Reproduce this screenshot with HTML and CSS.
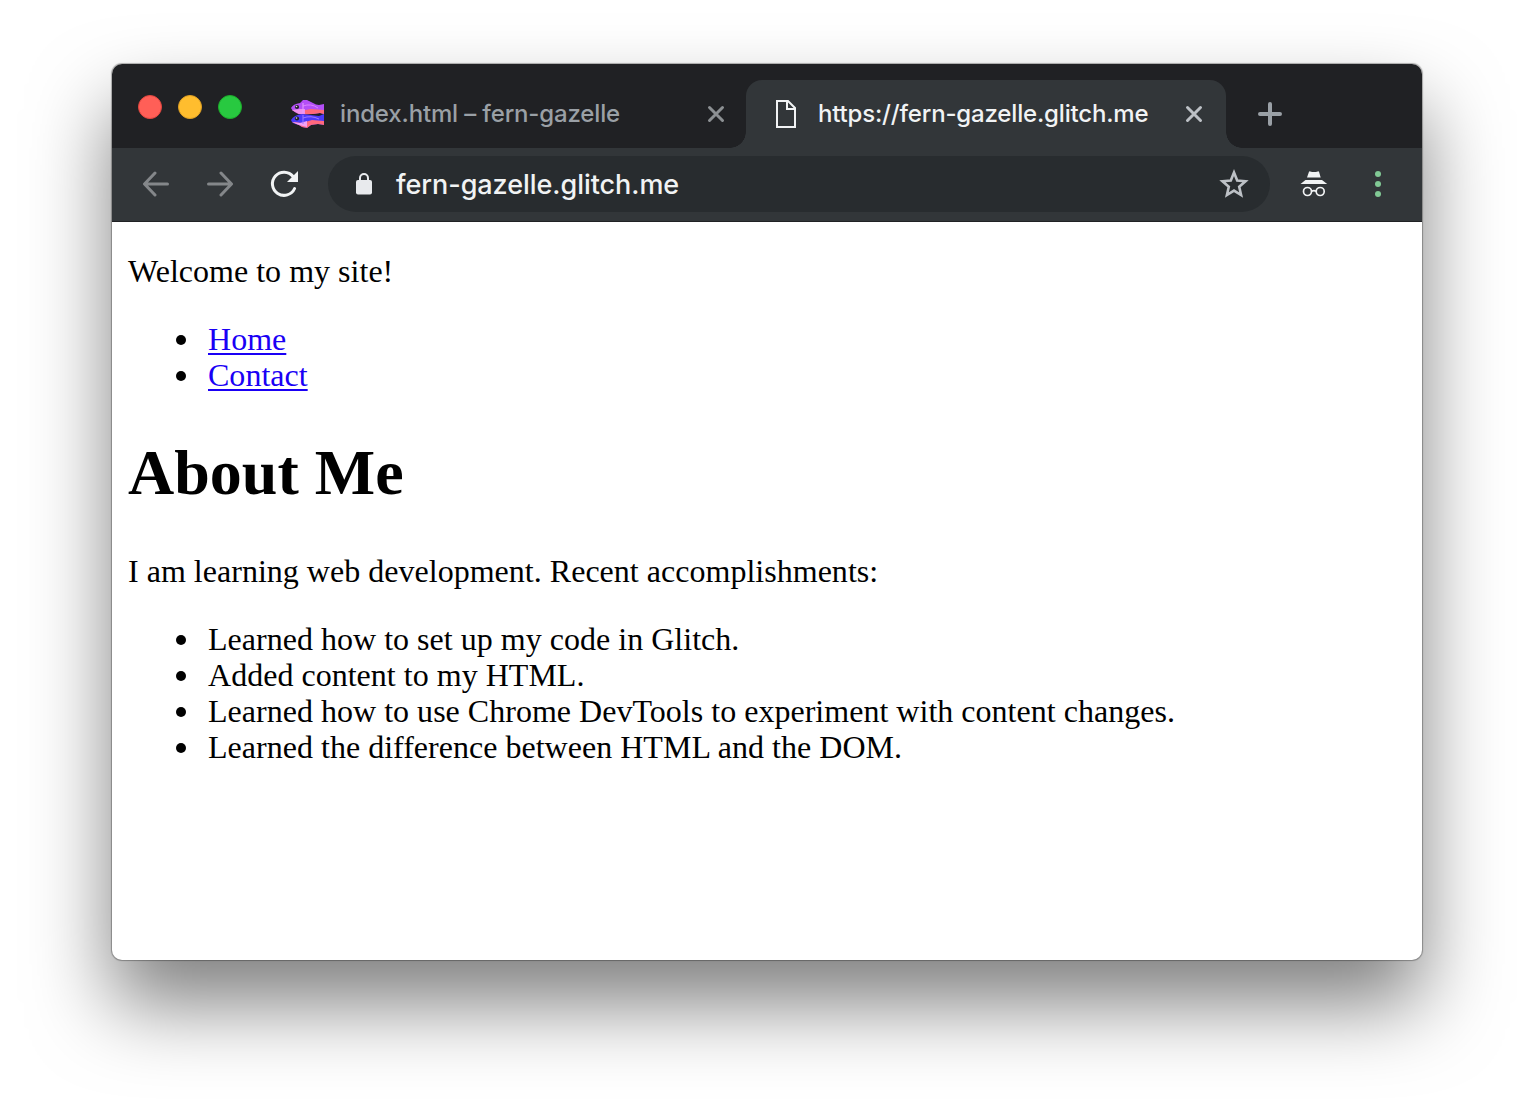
FILE: index.html
```html
<!DOCTYPE html>
<html lang="en">
<head>
<meta charset="utf-8">
<title>fern-gazelle</title>
<link rel="stylesheet" href="styles.css">
</head>
<body>
<div class="window">
  <div class="tabstrip">
    <div class="lights"><span class="light red"></span><span class="light yellow"></span><span class="light green"></span></div>
    <div class="tab">
      <svg class="fish" width="33" height="28" viewBox="0 0 33 28">
        <path d="M0 8Q2 4 9 3L12 0H16L22 3Q25 5 28 5L33 4V14L29 13Q18 15 8 14Q2 12 0 8Z" fill="#b44ff7"/>
        <path d="M1 10Q4 11 9 11L20 9L33 10V14L29 13Q18 15 8 14Z" fill="#ff6878"/>
        <path d="M1 10L9 9L14 9V14H8Z" fill="#ee91ed"/>
        <path d="M12 6Q20 3 27 8" fill="none" stroke="#dc83ff"/><path d="M12 3V13" stroke="#e5a0ff"/>
        <path d="M0 20Q3 15 11 14L28 16L33 14V25L27 24L20 25L16 28L11 27L8 25Q1 24 0 20Z" fill="#4b39fa"/>
        <path d="M1 22L11 23L21 20L33 21V25L27 24L20 25L16 28L11 27L8 25Z" fill="#ff687d"/>
        <path d="M1 22L9 23L16 21V27L8 25Z" fill="#f2a0f3"/>
        <path d="M12 18Q20 15 28 19M12 15V24" fill="none" stroke="#a078ff"/>
        <circle cx="6" cy="7" r="2.1" fill="#202124"/><circle cx="6" cy="18.5" r="2.1" fill="#202124"/>
        <circle cx="5.5" cy="6.5" r=".8" fill="#ddd"/><circle cx="5.5" cy="18" r=".8" fill="#ddd"/>
      </svg>
      <span class="tab-title">index.html – fern-gazelle</span>
      <svg class="close" width="18" height="18" viewBox="0 0 18 18"><path d="M2.5 2.5L15.5 15.5M15.5 2.5L2.5 15.5"/></svg>
    </div>
    <div class="tab active">
      <svg class="doc" width="20" height="28" viewBox="0 0 20 28"><path d="M1 1H12L19 8V27H1ZM11 1V9H19" fill="none" stroke="#f1f3f4" stroke-width="2"/></svg>
      <span class="tab-title">https://fern-gazelle.glitch.me</span>
      <svg class="close" width="18" height="18" viewBox="0 0 18 18"><path d="M2.5 2.5L15.5 15.5M15.5 2.5L2.5 15.5"/></svg>
    </div>
    <svg class="plus" width="24" height="24" viewBox="0 0 24 24"><path d="M12 2V22M2 12H22" stroke="#9aa0a6" stroke-width="4" stroke-linecap="round"/></svg>
  </div>
  <div class="toolbar">
    <svg class="back" width="28" height="26" viewBox="0 0 28 26"><path d="M25.5 13H3M13 2L2.5 13L13 24"/></svg>
    <svg class="forward" width="28" height="26" viewBox="0 0 28 26"><path d="M2.5 13H25M15 2L25.5 13L15 24"/></svg>
    <svg class="reload" width="28" height="28" viewBox="0 0 28 28"><path d="M23.1 6.5A11.6 11.6 0 1 0 24.6 18.5" fill="none" stroke="#f1f3f4" stroke-width="3" stroke-linecap="round"/><path d="M28 1V12H17Z" fill="#f1f3f4"/></svg>
    <div class="omnibox">
      <svg width="16" height="22" viewBox="0 0 16 22"><path d="M4 8V5A4 4 0 0 1 12 5V8" fill="none" stroke="#e8eaed" stroke-width="2"/><rect y="7" width="16" height="14.5" rx="2" fill="#e8eaed"/></svg>
      <span class="url">fern-gazelle.glitch.me</span>
      <svg class="star" width="30" height="30" viewBox="0 0 30 30"><path d="M15 3.6L18.2 11.6L26.5 12.3L20.2 17.7L22.1 26L15 21.6L7.9 26L9.8 17.7L3.5 12.3L11.8 11.6Z" fill="none" stroke="#bdc1c6" stroke-width="2.6"/></svg>
    </div>
    <svg class="incognito" width="28" height="26" viewBox="0 0 28 26"><path d="M7 6.5L9 .8Q9.3 .2 10.2 .4Q14 1.8 17.8 .4Q18.8 .1 19 .8L20.7 6.5ZM5.5 9H22L27.2 13H.5Z" fill="#f1f3f4"/><g fill="none" stroke="#f1f3f4" stroke-width="1.7"><circle cx="7.5" cy="20.5" r="4"/><circle cx="20.2" cy="20.5" r="4"/><path d="M11.5 20.2Q14 19 16.2 20.2"/></g></svg>
    <svg class="menu" width="6" height="26" viewBox="0 0 6 26" fill="#81c995"><circle cx="3" cy="3" r="3"/><circle cx="3" cy="13" r="3"/><circle cx="3" cy="23" r="3"/></svg>
  </div>
  <main class="page">
    <p>Welcome to my site!</p>
    <ul>
      <li><a href="#">Home</a></li>
      <li><a href="#">Contact</a></li>
    </ul>
    <h1>About Me</h1>
    <p>I am learning web development. Recent accomplishments:</p>
    <ul>
      <li>Learned how to set up my code in Glitch.</li>
      <li>Added content to my HTML.</li>
      <li>Learned how to use Chrome DevTools to experiment with content changes.</li>
      <li>Learned the difference between HTML and the DOM.</li>
    </ul>
  </main>
</div>
</body>
</html>
```
FILE: styles.css
```css
* { box-sizing: border-box; }
body { margin: 0; padding: 64px 112px 0; height: 1120px; overflow: hidden; background: #fff; }
svg { display: block; flex: none; }
.window {
  width: 1310px; height: 896px; border-radius: 10px; background: #fff;
  box-shadow: 0 0 1px 1px rgba(0,0,0,.3), 0 44px 80px rgba(0,0,0,.5);
  display: flex; flex-direction: column;
}
.tabstrip {
  height: 84px; flex: none; background: #202124; border-radius: 10px 10px 0 0;
  display: flex; align-items: flex-end; font-family: Inter, sans-serif;
}
.lights { display: flex; gap: 16px; padding-left: 26px; width: 154px; height: 53px; }
.light { width: 24px; height: 24px; border-radius: 50%; }
.red { background: #ff5f57; border: 1px solid #e2463f; }
.yellow { background: #ffbd2e; border: 1px solid #dfa023; }
.green { background: #28c940; border: 1px solid #1dad2b; }
.tab {
  width: 480px; height: 68px; padding: 0 21px 0 25px; position: relative;
  display: flex; align-items: center; color: #9aa0a6; font-size: 24px; white-space: nowrap;
}
.tab-title { flex: 1; margin-left: 16px; font-weight: 500; letter-spacing: -.15px; padding-bottom: 1px; }
.close { stroke: #8c9093; stroke-width: 3; stroke-linecap: round; }
.tab.active { background: #323639; border-radius: 16px 16px 0 0; color: #f1f3f4; padding: 0 23px 0 30px; }
.tab.active .tab-title { margin-left: 22px; letter-spacing: -.17px; }
.active .close { stroke: #bdc1c6; }
.active::before, .active::after { content: ""; position: absolute; bottom: 0; width: 16px; height: 16px; }
.active::before { left: -16px; background: radial-gradient(circle at 0 0, transparent 15.5px, #323639 16px); }
.active::after { right: -16px; background: radial-gradient(circle at 100% 0, transparent 15.5px, #323639 16px); }
.plus { margin: 0 0 22px 32px; }
.toolbar {
  height: 74px; flex: none; background: #323639; border-bottom: 1px solid #202124;
  display: flex; align-items: center; padding: 0 0 1px 30px;
}
.back, .forward { fill: none; stroke: #84878a; stroke-width: 3; stroke-linecap: round; stroke-linejoin: round; margin-bottom: 1px; }
.forward { margin-left: 36px; }
.reload { margin-left: 36px; }
.omnibox {
  margin-left: 30px; width: 942px; height: 56px; border-radius: 28px; background: #282c2f;
  display: flex; align-items: center; padding: 0 21px 0 28px;
  font: 500 27px Inter, sans-serif; color: #f1f3f4;
}
.url { flex: 1; margin-left: 24px; letter-spacing: -.05px; }
.incognito { margin-left: 30px; }
.menu { margin-left: 47px; }
.page { padding: 0 16px; font: 32px/36px "Liberation Serif", "Times New Roman", serif; letter-spacing: .02px; color: #000; }
.page p { margin: 32px 0; }
.page > p:first-child { margin-top: 31px; }
.page ul { margin: 32px 0; padding-left: 48px; list-style: none; }
.page li { display: flex; align-items: center; }
.page li::before { content: ""; width: 10px; height: 10px; margin: 2px 22px 0 0; border-radius: 50%; background: #000; }
.page h1 { font-size: 64px; line-height: 74px; margin: 43px 0; }
.page a { color: #1a00f5; text-decoration-thickness: 2px; text-underline-offset: 3px; }
```
